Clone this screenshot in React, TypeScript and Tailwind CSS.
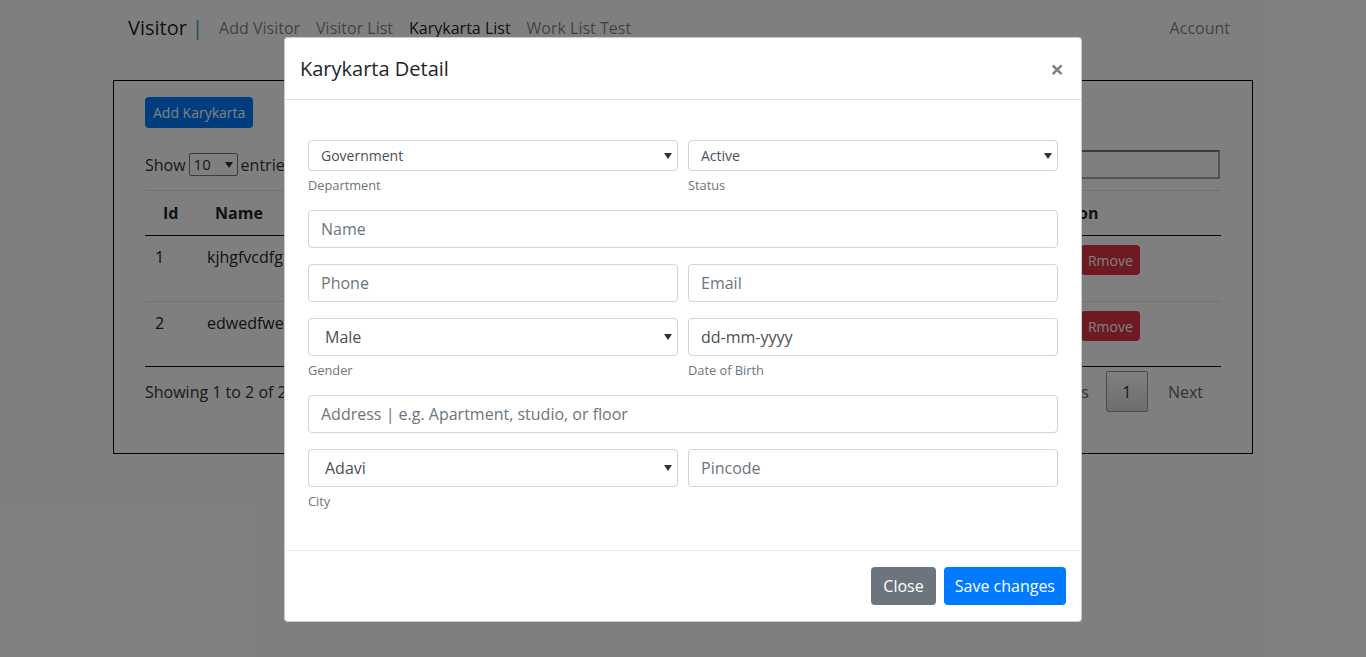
import React from "react";

const Arrow = () => (
  <svg width="8" height="6" viewBox="0 0 8 6" className="shrink-0">
    <path d="M0 0 H8 L4 6 Z" fill="#333" />
  </svg>
);

interface FieldProps {
  placeholder?: string;
  value?: string;
  select?: boolean;
  small?: boolean;
  label?: string;
}

const Field: React.FC<FieldProps> = ({ placeholder, value, select, small, label }) => {
  return (
    <div className="flex flex-col">
      <div
        className={`flex items-center justify-between bg-white border border-[#ced4da] rounded ${
          small ? "h-[31px] pl-[12px] pr-[5px] text-[14px]" : "h-[38px] text-[16px]"
        } ${select && !small ? "pl-[16px] pr-[5px]" : ""} ${!select ? "pl-[12px]" : ""}`}
      >
        {value ? (
          <span className="text-[#495057]">{value}</span>
        ) : (
          <span className="text-[#6c757d]">{placeholder}</span>
        )}
        {select && <Arrow />}
      </div>
      {label && <p className="mt-[5px] text-[12.8px] leading-[18px] text-[#6c757d]">{label}</p>}
    </div>
  );
};

const Background = () => {
  const rows = [
    { id: "1", name: "kjhgfvcdfgh", h: "h-[66px]" },
    { id: "2", name: "edwedfwefw", h: "h-[65px]" },
  ];
  return (
    <div className="bg-white min-h-[657px]">
      <nav className="h-[56px] w-[1140px] mx-auto px-[15px] flex items-center">
        <span className="text-[20px] text-black/90 mr-[8px]">
          Visitor <span className="text-[#17a2b8]">|</span>
        </span>
        <div className="flex text-[16px]">
          <span className="px-[8px] text-black/50">Add Visitor</span>
          <span className="px-[8px] text-black/50">Visitor List</span>
          <span className="px-[8px] text-black/90">Karykarta List</span>
          <span className="px-[8px] text-black/50">Work List Test</span>
        </div>
        <span className="ml-auto px-[8px] text-black/50">Account</span>
      </nav>
      <div className="w-[1140px] mx-auto mt-[24px] border border-black px-[31px] pt-[16px] h-[374px]">
        <button className="h-[31px] px-[8px] text-[14px] rounded bg-[#007bff] text-white">Add Karykarta</button>
        <div className="flex items-center justify-between mt-[22px] text-[16px] text-[#333]">
          <div className="flex items-center gap-[3px]">
            <span>Show</span>
            <span className="flex items-center justify-between w-[49px] h-[23px] border border-[#767676] rounded-[2px] px-[4px] text-[15px]">
              10 <Arrow />
            </span>
            <span>entries</span>
          </div>
          <div className="flex items-center gap-[6px] mr-[1px]">
            <span>Search:</span>
            <span className="w-[158px] h-[29px] border-2 border-[#a9a9a9] border-t-[#767676]" />
          </div>
        </div>
        <div className="mt-[11px] border-t border-[#dee2e6]">
          <div className="flex h-[45px] items-center font-bold text-[16px] text-[#212529] border-b border-[#111]">
            <span className="w-[52px] pl-[18px]">Id</span>
            <span className="w-[300px] pl-[18px]">Name</span>
            <span className="w-[300px] pl-[18px]">Phone</span>
            <span className="w-[230px] pl-[18px]">Email</span>
            <span className="pl-[20px]">Action</span>
          </div>
          {rows.map((r, i) => (
            <div
              key={r.id}
              className={`flex ${r.h} text-[16px] text-[#212529] ${i === 0 ? "border-b border-[#dee2e6]" : "border-b border-[#111]"}`}
            >
              <span className="w-[52px] pl-[10px] pt-[9px]">{r.id}</span>
              <span className="w-[300px] pl-[10px] pt-[9px]">{r.name}</span>
              <span className="w-[300px] pl-[10px] pt-[9px]">9876543210</span>
              <span className="w-[230px] pl-[10px] pt-[9px]">test@mail.com</span>
              <div className="flex gap-[5px] pt-[9px] pl-[10px]">
                <button className="h-[30px] px-[7px] text-[14px] rounded bg-[#28a745] text-white">Edit</button>
                <button className="h-[30px] px-[7px] text-[14px] rounded bg-[#dc3545] text-white">Rmove</button>
              </div>
            </div>
          ))}
        </div>
        <div className="flex items-center justify-between mt-[4px] text-[16px] text-[#333]">
          <span>Showing 1 to 2 of 2 entries</span>
          <div className="flex items-center mr-[18px]">
            <span className="px-[17px] text-[#666]">Previous</span>
            <span className="w-[42px] h-[41px] flex items-center justify-center border border-[#979797] rounded-[2px] bg-gradient-to-b from-white to-[#dcdcdc]">
              1
            </span>
            <span className="pl-[20px] text-[#666]">Next</span>
          </div>
        </div>
      </div>
    </div>
  );
};

export default function App() {
  return (
    <div className="relative h-[657px] overflow-hidden font-['Open_Sans',sans-serif]">
      <Background />
      <div className="absolute inset-0 bg-black/50">
        <div className="mt-[37px] mx-auto w-[798px] bg-white rounded-[4px] border border-black/20">
          <div className="flex items-center justify-between h-[62px] px-[15px] border-b border-[#dee2e6]">
            <h5 className="text-[20px] font-medium text-[#212529]">Karykarta Detail</h5>
            <span className="text-[24px] font-bold text-black/50 leading-none mr-[2px]">×</span>
          </div>
          <div className="px-[23px] pt-[40px] pb-[40px] flex flex-col gap-[16px]">
            <div className="grid grid-cols-2 gap-x-[10px]">
              <Field small select value="Government" label="Department" />
              <Field small select value="Active" label="Status" />
            </div>
            <Field placeholder="Name" />
            <div className="grid grid-cols-2 gap-x-[10px]">
              <Field placeholder="Phone" />
              <Field placeholder="Email" />
            </div>
            <div className="grid grid-cols-2 gap-x-[10px]">
              <Field select value="Male" label="Gender" />
              <Field value="dd-mm-yyyy" label="Date of Birth" />
            </div>
            <Field placeholder="Address | e.g. Apartment, studio, or floor" />
            <div className="grid grid-cols-2 gap-x-[10px]">
              <Field select value="Adavi" label="City" />
              <Field placeholder="Pincode" />
            </div>
          </div>
          <div className="flex justify-end gap-[8px] px-[15px] pt-[16px] pb-[16px] border-t border-[#e9ecef]">
            <button className="h-[38px] px-[12px] text-[16px] rounded bg-[#6c757d] text-white">Close</button>
            <button className="h-[38px] px-[11px] text-[16px] rounded bg-[#007bff] text-white">Save changes</button>
          </div>
        </div>
      </div>
    </div>
  );
}
